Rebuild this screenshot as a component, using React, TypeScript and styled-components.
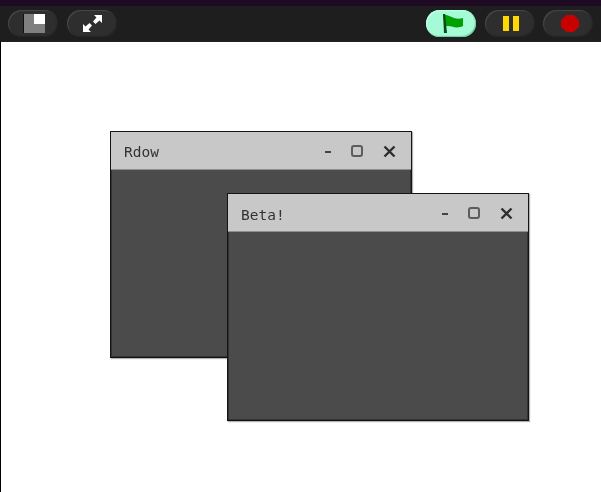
import React from 'react'
import styled, { createGlobalStyle } from 'styled-components'

const GlobalStyle = createGlobalStyle`
  html, body {
    margin: 0;
    padding: 0;
    background: #fff;
    overflow: hidden;
  }
`

const Page = styled.div`
  width: 601px;
  height: 492px;
  display: flex;
  flex-direction: column;
  background: #1a1a1a;
`

const TopStrip = styled.div`
  height: 6px;
  background: #1e0a22;
`

const Toolbar = styled.div`
  height: 35px;
  display: flex;
  align-items: center;
  justify-content: space-between;
  padding: 0 8px;
  box-sizing: border-box;
  background: #1e1e1e;
`

const ButtonGroup = styled.div<{ $gap: number }>`
  display: flex;
  gap: ${({ $gap }) => $gap}px;
`

const ToolButton = styled.button<{ $active?: boolean; $nudge?: number }>`
  width: 50px;
  height: 27px;
  padding: 0 0 0 ${({ $nudge }) => $nudge ?? 0}px;
  border: none;
  border-radius: 14px;
  display: flex;
  align-items: center;
  justify-content: center;
  background: ${({ $active }) => ($active ? '#a4fbd6' : '#2e2e2e')};
  box-shadow: ${({ $active }) =>
    $active
      ? 'inset -1px -1px 1px #6fc9a3, inset 1px 1px 1px #c4ffe8'
      : 'inset 1px 1px 1px #484848, inset -1px -1px 1px #242424'};

  svg {
    display: block;
  }
`

const Stage = styled.div`
  position: relative;
  flex: 1;
  background: #fff;
  border-left: 1px solid #000;
  border-top: 1px solid #222;
  overflow: hidden;
`

const Win = styled.div<{ $left: number; $top: number; $height: number }>`
  position: absolute;
  left: ${({ $left }) => $left}px;
  top: ${({ $top }) => $top}px;
  width: 302px;
  height: ${({ $height }) => $height}px;
  box-sizing: border-box;
  display: flex;
  flex-direction: column;
  background: #4b4b4b;
  border: 1px solid #141414;
  box-shadow: inset 0 0 0 1px #333, 1px 1px 1px rgba(0, 0, 0, 0.3);
`

const TitleBar = styled.div`
  height: 38px;
  flex-shrink: 0;
  box-sizing: border-box;
  display: flex;
  align-items: center;
  justify-content: space-between;
  padding: 0 15px 0 13px;
  background: #c8c8c8;
  border-bottom: 1px solid #8d8d8d;
`

const Title = styled.span<{ $drop: number }>`
  padding-top: ${({ $drop }) => $drop}px;
  font-family: 'DejaVu Sans Mono', 'Liberation Mono', monospace;
  font-size: 14.5px;
  color: #333;
  filter: blur(0.6px);
`

const WinControls = styled.div`
  display: flex;
  align-items: center;
  padding-top: 1px;
  filter: blur(0.5px);
`

const MinimizeMark = styled.span`
  width: 6px;
  height: 2px;
  margin: 1px 20px 0 0;
  background: #444;
`

const MaximizeMark = styled.span`
  width: 12px;
  height: 12px;
  box-sizing: border-box;
  margin-right: 20px;
  border: 2px solid #5c5c5c;
  border-radius: 3px;
`

const CloseMark = styled.svg`
  display: block;
`

function FloatWindow({
  title,
  left,
  top,
  height,
  drop
}: {
  title: string
  left: number
  top: number
  height: number
  drop: number
}) {
  return (
    <Win $left={left} $top={top} $height={height}>
      <TitleBar>
        <Title $drop={drop}>{title}</Title>
        <WinControls>
          <MinimizeMark />
          <MaximizeMark />
          <CloseMark width="13" height="13" viewBox="0 0 13 13">
            <path d="M1.5 1.5 L11.5 11.5 M11.5 1.5 L1.5 11.5" stroke="#2e2e2e" strokeWidth="2.4" />
          </CloseMark>
        </WinControls>
      </TitleBar>
    </Win>
  )
}

export default function App() {
  return (
    <Page>
      <GlobalStyle />
      <TopStrip />
      <Toolbar>
        <ButtonGroup $gap={9}>
          <ToolButton $nudge={2}>
            <svg width="22" height="19" viewBox="0 0 22 19">
              <rect x="0" y="0" width="22" height="19" fill="#808080" />
              <rect x="0" y="0" width="1" height="19" fill="#111" />
              <rect x="11" y="0" width="11" height="10" fill="#fff" />
            </svg>
          </ToolButton>
          <ToolButton $nudge={1}>
            <svg width="19" height="17" viewBox="0 0 19 17">
              <path
                d="M11 0 H19 V8 L16.5 5.5 L12.5 9 L10 6.5 L13.5 2.5 Z M0 17 V9 L2.5 11.5 L6.5 8 L9 10.5 L5.5 14.5 L8 17 Z"
                fill="#fff"
              />
            </svg>
          </ToolButton>
        </ButtonGroup>
        <ButtonGroup $gap={8.5}>
          <ToolButton $active $nudge={2}>
            <svg width="21" height="19" viewBox="0 0 21 19">
              <path d="M1 0 C6 1 9 3 12 4 C15 5 18 5 21 4 L21 12 C17 14 13 13.5 10 12.5 C8 12 5 11.5 3 12.5 Z" fill="#00a000" />
              <path d="M1 0 L3 0 L5 19 L2 19 Z" fill="#0a4a1a" />
            </svg>
          </ToolButton>
          <ToolButton $nudge={2}>
            <svg width="16" height="15" viewBox="0 0 16 15">
              <rect x="0" y="0" width="6" height="15" fill="#ffd800" />
              <rect x="10" y="0" width="6" height="15" fill="#ffd800" />
            </svg>
          </ToolButton>
          <ToolButton $nudge={4}>
            <svg width="18" height="17" viewBox="0 0 18 17">
              <path d="M5.5 0 H12.5 L18 5 V12 L12.5 17 H5.5 L0 12 V5 Z" fill="#c80000" />
            </svg>
          </ToolButton>
        </ButtonGroup>
      </Toolbar>
      <Stage>
        <FloatWindow title="Rdow" left={109} top={89} height={227} drop={2} />
        <FloatWindow title="Beta!" left={226} top={151} height={228} drop={4} />
      </Stage>
    </Page>
  )
}
